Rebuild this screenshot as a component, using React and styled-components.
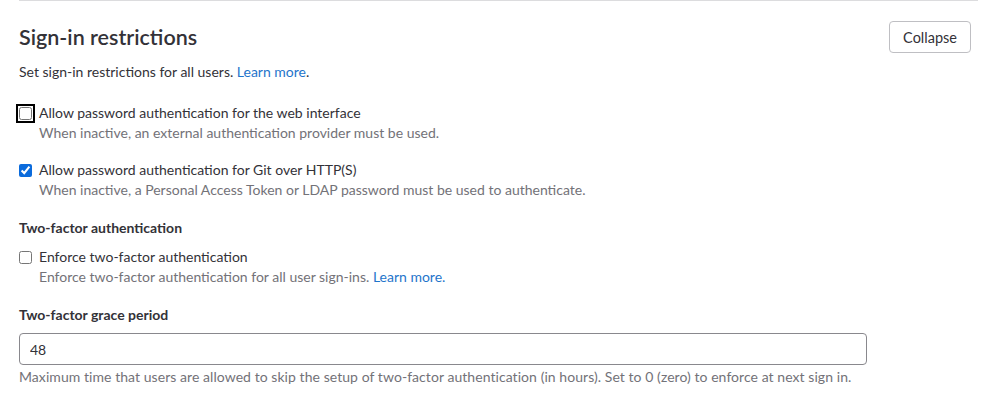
import React from "react";
import styled, { createGlobalStyle } from "styled-components";

const Global = createGlobalStyle`
  html, body { margin: 0; padding: 0; background: #fff; }
  body { font-family: Lato, "Noto Sans", "Liberation Sans", sans-serif; color: #333238; font-size: 14px; }
`;

const Section = styled.section`
  margin: 0 24px 0 19px;
  border-top: 1px solid #dcdcde;
`;

const Header = styled.div`
  display: flex;
  justify-content: space-between;
  align-items: flex-start;
  padding-top: 20px;
  margin-right: 7px;
`;

const Title = styled.h2`
  margin: 4px 0 0;
  font-size: 21.5px;
  line-height: 24px;
  font-weight: 600;
  color: #333238;
`;

const Button = styled.button`
  height: 32px;
  padding: 0 13px;
  border: 1px solid #bfbfc3;
  border-radius: 4px;
  background: #fff;
  font: inherit;
  font-size: 14.5px;
  color: #333238;
`;

const Lead = styled.p`
  margin: 9px 0 21px;
  line-height: 20px;
`;

const Link = styled.a`
  color: #1f75cb;
  text-decoration: none;
`;

const CheckRow = styled.div`
  display: grid;
  grid-template-columns: 20px 1fr;
  margin-bottom: ${(p) => p.$mb || 0}px;
`;

const Box = styled.input`
  margin: 4px 0 0;
  width: 13px;
  height: 13px;
  accent-color: #0b6bdc;
  ${(p) => p.$focus && `outline: 2px solid #000; outline-offset: 1px; border-radius: 3px;`}
`;

const Label = styled.label`
  line-height: 20px;
`;

const Help = styled.div`
  grid-column: 2;
  line-height: 20px;
  color: #737278;
`;

const GroupLabel = styled.div`
  font-weight: 700;
  line-height: 20px;
  margin-bottom: ${(p) => p.$mb}px;
`;

const Input = styled.input`
  display: block;
  box-sizing: border-box;
  width: 848px;
  height: 32px;
  padding: 0 10px;
  border: 1px solid #89888d;
  border-radius: 4px;
  font: inherit;
  font-size: 14px;
  color: #333238;
`;

const FieldHelp = styled.div`
  margin-top: 2px;
  line-height: 20px;
  color: #737278;
  letter-spacing: 0.06px;
`;

export default function App() {
  return (
    <>
      <Global />
      <Section>
        <Header>
          <Title>Sign-in restrictions</Title>
          <Button>Collapse</Button>
        </Header>
        <Lead>
          Set sign-in restrictions for all users. <Link href="#">Learn more</Link>.
        </Lead>
        <CheckRow $mb={17}>
          <Box type="checkbox" $focus />
          <Label>Allow password authentication for the web interface</Label>
          <Help>When inactive, an external authentication provider must be used.</Help>
        </CheckRow>
        <CheckRow $mb={18}>
          <Box type="checkbox" defaultChecked />
          <Label>Allow password authentication for Git over HTTP(S)</Label>
          <Help>When inactive, a Personal Access Token or LDAP password must be used to authenticate.</Help>
        </CheckRow>
        <GroupLabel $mb={9}>Two-factor authentication</GroupLabel>
        <CheckRow $mb={18}>
          <Box type="checkbox" />
          <Label>Enforce two-factor authentication</Label>
          <Help>
            Enforce two-factor authentication for all user sign-ins. <Link href="#">Learn more.</Link>
          </Help>
        </CheckRow>
        <GroupLabel $mb={8}>Two-factor grace period</GroupLabel>
        <Input defaultValue="48" />
        <FieldHelp>
          Maximum time that users are allowed to skip the setup of two-factor authentication (in hours). Set to 0 (zero) to enforce at next sign in.
        </FieldHelp>
      </Section>
    </>
  );
}
